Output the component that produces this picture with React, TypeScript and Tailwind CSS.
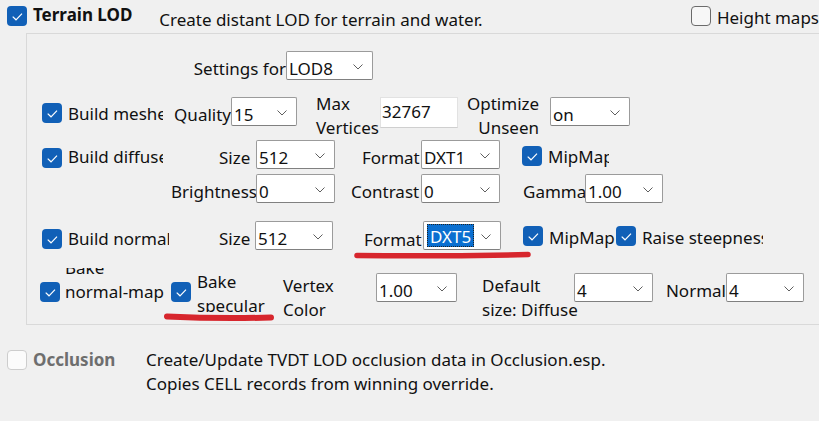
import React from "react";

function Check({ className = "", off = false, disabled = false }: { className?: string; off?: boolean; disabled?: boolean }) {
  if (disabled) {
    return <div className={`w-[20px] h-[20px] shrink-0 rounded-[4px] bg-[#fbfbfb] border border-[#cdcdcd] ${className}`} />;
  }
  if (off) {
    return <div className={`w-[20px] h-[20px] shrink-0 rounded-[4px] bg-[#f7f7f7] border border-[#6b6b6b] ${className}`} />;
  }
  return (
    <div className={`w-[20px] h-[20px] shrink-0 rounded-[4px] bg-[#1160b7] ${className}`}>
      <svg width="20" height="20" viewBox="0 0 20 20">
        <path d="M5.7 10.6 L9 13.8 L15 7.6" stroke="#ffffff" strokeWidth="1.2" fill="none" />
      </svg>
    </div>
  );
}

function Combo({ v, className = "", sel = false }: { v: string; className?: string; sel?: boolean }) {
  return (
    <div className={`h-[29px] shrink-0 bg-white border border-[#9b9b9b] border-b-[#808080] rounded-[2px] flex items-end pl-[2px] ${className}`}>
      {sel ? (
        <div className="flex-1 flex items-end pb-[1px]">
          <div className="h-[23px] mb-[1px] ml-[1px] pt-[2px] px-[2px] leading-[20px] bg-[#0a6fd0] text-white border border-dotted border-[#222]">{v}</div>
        </div>
      ) : (
        <span className="flex-1 whitespace-nowrap">{v}</span>
      )}
      <svg className="self-start mt-[12px] mr-[9px] shrink-0" width="10" height="6" viewBox="0 0 10 6">
        <path d="M0.5 0.5 L5 5 L9.5 0.5" stroke="#5f5f5f" strokeWidth="1" fill="none" />
      </svg>
    </div>
  );
}

export default function App() {
  return (
    <div className="w-[819px] h-[421px] bg-[#f0f0f0] relative overflow-hidden font-['Noto_Sans',sans-serif] text-[17px] leading-[20px] text-[#111]">
      {/* header */}
      <div className="flex items-start h-[33px] whitespace-nowrap">
        <Check className="ml-[7px] mt-[6px]" />
        <div className="ml-[6px] mt-[5px] w-[127px] font-bold">Terrain LOD</div>
        <div className="mt-[10px] w-[535px]">Create distant LOD for terrain and water.</div>
        <Check off className="mt-[6px]" />
        <div className="ml-[6px] mt-[8px]">Height maps</div>
      </div>

      {/* group */}
      <div className="ml-[26px] h-[292px] border-l border-t border-b border-[#d9d9d9] flex flex-col whitespace-nowrap">
        {/* Row A */}
        <div className="flex items-start h-[58px] shrink-0">
          <div className="ml-[156px] w-[103px] text-right mt-[25px]">Settings for</div>
          <Combo v="LOD8" className="w-[87px] mt-[17px]" />
        </div>

        {/* Row B */}
        <div className="flex items-start h-[48px] shrink-0">
          <Check className="ml-[15px] mt-[11px]" />
          <div className="ml-[6px] w-[95px] overflow-hidden mt-[12px]">Build meshes</div>
          <div className="w-[68px] text-right mt-[13px]">Quality</div>
          <Combo v="15" className="w-[66px] mt-[5px]" />
          <div className="ml-[19px] w-[64px] leading-[24px]">
            <div>Max</div>
            <div>Vertices</div>
          </div>
          <div className="w-[78px] h-[31px] mt-[5px] bg-white border border-[#e2e2e2] border-b-[#cfcfcf] pl-[1px] pt-[4px]">32767</div>
          <div className="ml-[9px] w-[72px] text-right leading-[24px]">
            <div>Optimize</div>
            <div>Unseen</div>
          </div>
          <Combo v="on" className="ml-[11px] w-[80px] mt-[5px]" />
        </div>

        {/* Row C */}
        <div className="flex items-start h-[34px] shrink-0">
          <Check className="ml-[15px] mt-[8px]" />
          <div className="ml-[6px] w-[95px] overflow-hidden mt-[7px]">Build diffuse</div>
          <div className="ml-[56px] w-[37px] mt-[8px]">Size</div>
          <Combo v="512" className="w-[79px]" />
          <div className="ml-[27px] w-[59px] mt-[8px]">Format</div>
          <Combo v="DXT1" className="w-[79px]" />
          <Check className="ml-[22px] mt-[6px]" />
          <div className="ml-[6px] w-[61px] overflow-hidden mt-[7px]">MipMap</div>
        </div>

        {/* Row D */}
        <div className="flex items-start h-[47px] shrink-0">
          <div className="ml-[144px] w-[85px] text-right mt-[8px]">Brightness</div>
          <Combo v="0" className="w-[79px]" />
          <div className="ml-[16px] w-[70px] overflow-hidden mt-[8px]">Contrast</div>
          <Combo v="0" className="w-[79px]" />
          <div className="ml-[23px] w-[62px] mt-[8px]">Gamma</div>
          <Combo v="1.00" className="w-[78px]" />
        </div>

        {/* Row E */}
        <div className="flex items-start h-[47px] shrink-0">
          <Check className="ml-[15px] mt-[8px]" />
          <div className="ml-[6px] w-[101px] overflow-hidden mt-[8px]">Build normal</div>
          <div className="ml-[50px] w-[36px] mt-[8px]">Size</div>
          <Combo v="512" className="w-[78px]" />
          <div className="ml-[31px] w-[59px] mt-[9px]">Format</div>
          <Combo v="DXT5" sel className="w-[78px]" />
          <Check className="ml-[22px] mt-[5px]" />
          <div className="ml-[6px] w-[67px] overflow-hidden mt-[7px]">MipMap</div>
          <Check className="mt-[5px]" />
          <div className="ml-[6px] w-[121px] overflow-hidden mt-[7px]">Raise steepness</div>
        </div>

        {/* Row F */}
        <div className="flex items-start h-[56px] shrink-0">
          <Check className="ml-[13px] mt-[14px]" />
          <div className="ml-[5px] w-[104px] h-[44px] overflow-hidden">
            <div className="-mt-[12px] leading-[24px]">
              <div>Bake</div>
              <div>normal-map</div>
            </div>
          </div>
          <Check className="ml-[2px] mt-[14px]" />
          <div className="ml-[6px] w-[84px] h-[42px] overflow-hidden mt-[2px] leading-[24px]">
            <div>Bake</div>
            <div>specular</div>
          </div>
          <div className="ml-[2px] w-[93px] mt-[6px] leading-[24px]">
            <div>Vertex</div>
            <div>Color</div>
          </div>
          <Combo v="1.00" className="w-[81px] mt-[5px]" />
          <div className="ml-[25px] w-[92px] mt-[6px] leading-[24px]">
            <div>Default</div>
            <div>size: Diffuse</div>
          </div>
          <Combo v="4" className="w-[79px] mt-[5px]" />
          <div className="w-[73px] text-right mt-[13px]">Normal</div>
          <Combo v="4" className="w-[78px] mt-[5px]" />
        </div>
      </div>

      {/* Occlusion */}
      <div className="flex items-start whitespace-nowrap">
        <Check disabled className="ml-[7px] mt-[25px]" />
        <div className="ml-[6px] w-[113px] mt-[25px] font-bold text-[#6e6e6e]">Occlusion</div>
        <div className="mt-[23px] leading-[24px]">
          <div>Create/Update TVDT LOD occlusion data in Occlusion.esp.</div>
          <div>Copies CELL records from winning override.</div>
        </div>
      </div>

      {/* red annotation strokes */}
      <svg className="absolute left-0 top-0 pointer-events-none" width="819" height="421" viewBox="0 0 819 421">
        <path d="M357 255.5 Q 440 256.5 528 254.5" stroke="#d7262d" strokeWidth="5.5" strokeLinecap="round" fill="none" />
        <path d="M167 316.5 Q 220 319 271 317.5" stroke="#d7262d" strokeWidth="6" strokeLinecap="round" fill="none" />
      </svg>
    </div>
  );
}
